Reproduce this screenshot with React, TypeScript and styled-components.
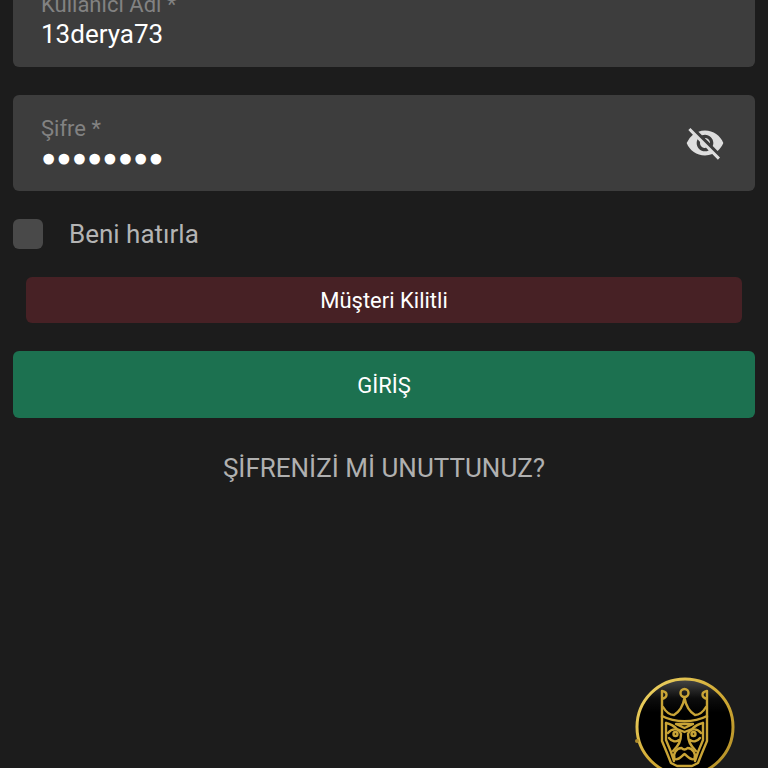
import React from "react";
import styled, { createGlobalStyle } from "styled-components";
import { MdVisibilityOff } from "react-icons/md";

const GlobalStyle = createGlobalStyle`
  *, *::before, *::after { box-sizing: border-box; }
  body {
    margin: 0;
    background: #1c1c1c;
    font-family: Roboto, "Noto Sans", sans-serif;
    overflow: hidden;
  }
`;

/* The page is shown scrolled, so the first field starts above the window. */
const LoginForm = styled.form`
  display: flex;
  flex-direction: column;
  gap: 28px;
  margin-top: -29px;
  padding: 0 13px;
`;

const Field = styled.div`
  display: flex;
  align-items: center;
  height: 96px;
  padding: 0 30px 0 28px;
  border-radius: 6px;
  background: #3d3d3d;
`;

const FieldBody = styled.div`
  display: flex;
  flex: 1;
  flex-direction: column;
  min-width: 0;
  padding-top: 4px;
`;

const FieldLabel = styled.label`
  color: #828282;
  font-size: 22px;
  line-height: 26px;
`;

const FieldInput = styled.input`
  width: 100%;
  height: 32px;
  padding: 0;
  border: 0;
  outline: 0;
  background: transparent;
  color: #fff;
  font-family: inherit;
  font-size: 26px;
  line-height: 32px;
  &[type="password"] {
    padding-top: 4px;
    font-family: "DejaVu Sans", sans-serif;
    -webkit-text-stroke: 3px #fff;
  }
`;

const RevealButton = styled.button`
  display: flex;
  padding: 0;
  border: 0;
  background: none;
  color: #dedede;
  font-size: 40px;
`;

const RememberRow = styled.label`
  display: flex;
  align-items: center;
  gap: 26px;
  height: 30px;
  color: #b4b4b4;
  font-size: 26px;
`;

const Checkbox = styled.input`
  appearance: none;
  width: 30px;
  height: 30px;
  margin: 0;
  border-radius: 6px;
  background: #494949;
  &:checked { background: #1c7150; }
`;

const ErrorMessage = styled.div`
  margin: 0 13px;
  padding-top: 2px;
  border-radius: 6px;
  background: #472125;
  color: #fff;
  font-size: 22px;
  line-height: 44px;
  text-align: center;
`;

const SubmitButton = styled.button`
  height: 67px;
  padding: 2px 0 0;
  border: 0;
  border-radius: 6px;
  background: #1c7150;
  color: #fff;
  font-family: inherit;
  font-size: 22px;
`;

const ForgotLink = styled.a`
  align-self: center;
  margin-top: 6px;
  color: #b0b0b0;
  font-size: 26px;
  line-height: 32px;
  text-decoration: none;
`;

const SupportButton = styled.button`
  position: fixed;
  right: 33px;
  bottom: -9px;
  width: 100px;
  height: 100px;
  padding: 0;
  border: 0;
  border-radius: 50%;
  background: none;
`;

function KingLogo() {
  return (
    <svg width="100" height="100" viewBox="0 0 100 100" fill="none" aria-hidden="true">
      <defs>
        <linearGradient id="gold" x1="0" y1="0" x2="1" y2="1">
          <stop offset="0" stopColor="#f0d76a" />
          <stop offset="0.5" stopColor="#d2ab35" />
          <stop offset="1" stopColor="#b18d26" />
        </linearGradient>
        <linearGradient id="sheen" x1="0" y1="0" x2="0" y2="1">
          <stop offset="0" stopColor="#484848" />
          <stop offset="0.2" stopColor="#0d0d0d" />
          <stop offset="0.35" stopColor="#000" />
        </linearGradient>
      </defs>
      <circle cx="50" cy="50" r="48" fill="url(#sheen)" stroke="url(#gold)" strokeWidth="3" />
      <circle cx="2" cy="64" r="2" fill="#ad8b2d" />
      <g stroke="#c9a436" strokeWidth="2.4" strokeLinejoin="round" strokeLinecap="round">
        <circle cx="49.5" cy="16" r="4" />
        <path d="M27 40V14c6 1 6 6 0 8M72 40V14c-6 1-6 6 0 8" />
        <path d="M28 30c3 5 7 8 11 8 5-3 9-9 10.500-17 1.500 8 5.500 14 10.500 17 4 0 8-3 11-8" />
        <path d="M27 39c13 7 32 7 45 0" />
        <path d="M27 40v24l5 12 4 10 6 3h15l6-3 4-10 5-12V40" />
        <path d="M31 46v17l5 12 3 9M68 46v17l-5 12-3 9" />
        <path d="M31 46c5 1 8 3 11 6l7.500 3 7.500-3c3-3 6-5 11-6" />
        <path d="M41 47h17l-8.500 4z" />
        <circle cx="40.500" cy="57" r="2" />
        <circle cx="58.500" cy="57" r="2" />
        <path d="M33 56c4-5 11-5 13 1 0 7-2 11-8 17M66 56c-4-5-11-5-13 1 0 7 2 11 8 17M34 61c3 4 7 4 10 2M65 61c-3 4-7 4-10 2" />
        <path d="M46.500 71c2 2 4 2 6 0 5 0 9 6 7 11-4 2-7-3-10-5-3 2-6 7-10 5-2-5 2-11 7-11" />
      </g>
    </svg>
  );
}

export default function App() {
  return (
    <>
      <GlobalStyle />
      <main lang="tr">
        <LoginForm onSubmit={(event) => event.preventDefault()}>
          <Field>
            <FieldBody>
              <FieldLabel htmlFor="username">Kullanıcı Adı *</FieldLabel>
              <FieldInput id="username" type="text" defaultValue="13derya73" />
            </FieldBody>
          </Field>
          <Field>
            <FieldBody>
              <FieldLabel htmlFor="password">Şifre *</FieldLabel>
              <FieldInput id="password" type="password" defaultValue="12345678" />
            </FieldBody>
            <RevealButton type="button" aria-label="Şifreyi göster">
              <MdVisibilityOff />
            </RevealButton>
          </Field>
          <RememberRow>
            <Checkbox type="checkbox" />
            Beni hatırla
          </RememberRow>
          <ErrorMessage role="alert">Müşteri Kilitli</ErrorMessage>
          <SubmitButton type="submit">GİRİŞ</SubmitButton>
          <ForgotLink href="#forgot">ŞİFRENİZİ Mİ UNUTTUNUZ?</ForgotLink>
        </LoginForm>
        <SupportButton type="button" aria-label="Canlı destek">
          <KingLogo />
        </SupportButton>
      </main>
    </>
  );
}
